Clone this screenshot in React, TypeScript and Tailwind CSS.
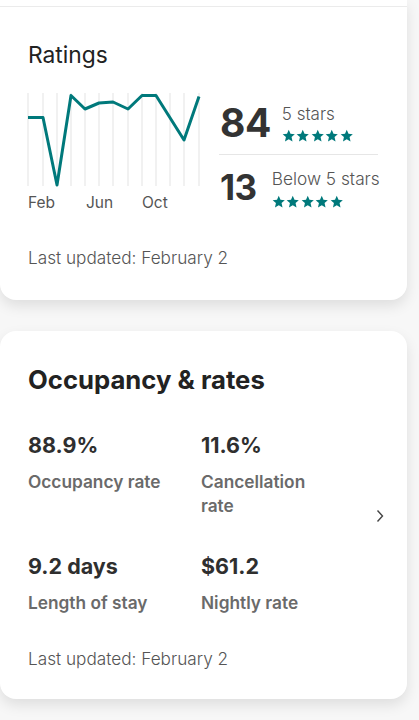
import React from 'react';

const TEAL = '#00797b';

const points: [number, number][] = [
  [2, 26.5], [17, 26.5], [31, 94], [45, 4.5], [59, 18], [73, 12], [87, 11],
  [102, 18], [116, 4.5], [130, 4.5], [158, 49], [173, 5.5],
];
const gridX = [2, 17, 31, 45, 59, 73, 87, 102, 116, 130, 144, 158, 173];

function Star() {
  return (
    <svg width="13.5" height="13.5" viewBox="0 0 24 24" fill={TEAL}>
      <path d="M12 1.5l3.1 7.1 7.7.7-5.8 5.1 1.7 7.6L12 18l-6.7 4 1.7-7.6-5.8-5.1 7.7-.7z" />
    </svg>
  );
}

function Stars() {
  return (
    <div className="flex gap-[1px]">
      {[0, 1, 2, 3, 4].map(i => (
        <Star key={i} />
      ))}
    </div>
  );
}

function Chart() {
  return (
    <div className="w-[176px] shrink-0">
      <svg width="176" height="97" viewBox="0 0 176 97">
        {gridX.map(x => (
          <line key={x} x1={x} y1={2} x2={x} y2={95} stroke="#ececec" strokeWidth="1.5" />
        ))}
        <polyline
          points={points.map(p => p.join(',')).join(' ')}
          fill="none"
          stroke={TEAL}
          strokeWidth="3"
          strokeLinejoin="round"
        />
      </svg>
      <div className="relative h-[20px] text-[15.5px] text-[#555] leading-none mt-[7px]">
        <span className="absolute left-[2px]">Feb</span>
        <span className="absolute left-[60px]">Jun</span>
        <span className="absolute left-[116px]">Oct</span>
      </div>
    </div>
  );
}

function Stat({ value, label }: { value: string; label: React.ReactNode }) {
  return (
    <div>
      <div className="text-[21.5px] font-bold text-[#2f2f2f] leading-[28px]">{value}</div>
      <div className="mt-[11px] text-[17.3px] font-semibold text-[#6a6a6a] leading-[24px]">{label}</div>
    </div>
  );
}

export default function App() {
  return (
    <div
      className="min-h-screen bg-[#f7f7f7] w-[419px] overflow-hidden"
      style={{ fontFamily: 'Inter, "Noto Sans", sans-serif' }}
    >
      {/* Ratings card */}
      <div className="w-[407px] bg-white rounded-b-2xl shadow-[0_6px_14px_rgba(0,0,0,0.10)]">
        <div className="h-[7px] border-b border-[#ebebeb]" />
        <div className="px-[28px] pt-[33px] pb-[31px]">
          <h2 className="text-[22.8px] text-[#222] leading-[30px]">Ratings</h2>
          <div className="flex mt-[21px] ml-[-2px]">
            <Chart />
            <div className="ml-[17px] w-[159px] shrink-0 pt-[12px] whitespace-nowrap">
              <div className="flex items-start pb-[11px] border-b border-[#e6e6e6]">
                <span className="text-[39px] font-bold text-[#333] leading-[40px] tracking-[-0.5px] ml-[1px]">84</span>
                <div className="ml-[11px] pt-[1px]">
                  <div className="text-[17px] font-light text-[#555] leading-[20px]">5 stars</div>
                  <div className="mt-[5px]"><Stars /></div>
                </div>
              </div>
              <div className="flex items-start pt-[13px]">
                <span className="text-[35px] font-bold text-[#333] leading-[38px] tracking-[-0.5px] ml-[1px]">13</span>
                <div className="ml-[15px] pt-[1px] shrink-0">
                  <div className="text-[17.3px] font-light text-[#555] leading-[20px]">Below 5 stars</div>
                  <div className="mt-[6px]"><Stars /></div>
                </div>
              </div>
            </div>
          </div>
          <p className="mt-[32px] text-[17.2px] font-light text-[#555] leading-[22px]">Last updated: February 2</p>
        </div>
      </div>

      {/* Occupancy card */}
      <div className="mt-[31px] w-[407px] bg-white rounded-2xl shadow-[0_6px_14px_rgba(0,0,0,0.10)] px-[28px] pt-[33px] pb-[29px]">
        <h2 className="text-[25.7px] font-bold text-[#222] leading-[32px]">Occupancy &amp; rates</h2>
        <div className="flex items-center mt-[35px]">
          <div className="grid grid-cols-[173px_173px] gap-y-[34px] flex-1">
            <Stat value="88.9%" label="Occupancy rate" />
            <Stat value="11.6%" label={<>Cancellation<br />rate</>} />
            <Stat value="9.2 days" label="Length of stay" />
            <Stat value="$61.2" label="Nightly rate" />
          </div>
          <svg width="12" height="14" viewBox="0 0 12 14" className="shrink-0 mr-[-1px] mt-[-14px]">
            <path d="M3.5 1.5l5 5.5-5 5.5" fill="none" stroke="#444" strokeWidth="1.4" />
          </svg>
        </div>
        <p className="mt-[33px] text-[17.2px] font-light text-[#555] leading-[22px]">Last updated: February 2</p>
      </div>
    </div>
  );
}
